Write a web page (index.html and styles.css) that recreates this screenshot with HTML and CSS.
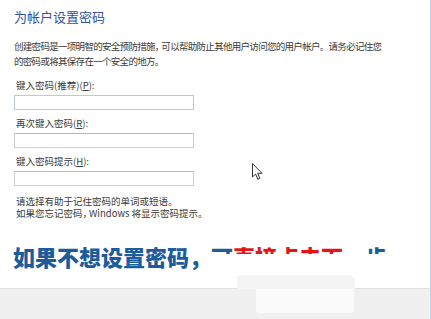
FILE: index.html
```html
<!DOCTYPE html>
<html lang="zh-CN">
<head>
<meta charset="utf-8">
<link rel="stylesheet" href="styles.css">
</head>
<body>
<div class="window">
  <main class="content">
    <h1 class="title">为帐户设置密码</h1>
    <p class="intro">创建密码是一项明智的安全预防措施<span class="narrow">，</span>可以帮助防止其他用户访问您的用户帐户。请务必记住您<br>的密码或将其保存在一个安全的地方。</p>
    <div class="field">
      <label class="label">键入密码(推荐)(<u>P</u>):</label>
      <div class="input focus"></div>
    </div>
    <div class="field">
      <label class="label">再次键入密码(<u>R</u>):</label>
      <div class="input"></div>
    </div>
    <div class="field">
      <label class="label">键入密码提示(<u>H</u>):</label>
      <div class="input"></div>
    </div>
    <p class="hint">请选择有助于记住密码的单词或短语。<br>如果您忘记密码<span class="narrow">，</span>Windows 将显示密码提示。</p>
    <div class="banner">
      <span class="banner-main">如果不想设置密码，</span><span class="banner-clip"><span class="blue">可</span><span class="red">直接点击下</span><span class="blue">一步</span></span>
    </div>
  </main>
  <footer class="footer"></footer>
  <div class="smudge-top"></div>
  <div class="smudge-bottom"></div>
  <svg class="cursor" width="12" height="18" viewBox="0 0 12 18">
    <path d="M0.5 0.5 L0.5 14 L3.6 11 L5.8 16.3 L7.8 15.4 L5.7 10.3 L10 10.3 Z" fill="#fff" stroke="#333" stroke-width="1" stroke-linejoin="round"/>
  </svg>
</div>
</body>
</html>
```
FILE: styles.css
```css
html, body {
  margin: 0;
  padding: 0;
  background: #fff;
}
.window {
  position: relative;
  width: 431px;
  height: 319px;
  overflow: hidden;
  display: flex;
  flex-direction: column;
  font-family: "Noto Sans CJK SC", "Noto Sans", sans-serif;
  color: #3a3a3a;
  background: #fff;
  border-right: 1px solid #c3d5ea;
  box-sizing: border-box;
}
.content {
  flex: 1;
  padding: 9px 0 0 14px;
}
.title {
  margin: 0;
  font-size: 13px;
  line-height: 16px;
  font-weight: 400;
  color: #34509f;
}
.intro {
  margin: 14px 0 0 0;
  font-size: 9.5px;
  line-height: 15px;
  letter-spacing: -0.7px;
  color: #3a3a3a;
  white-space: nowrap;
}
.narrow {
  letter-spacing: -3px;
}
.field {
  display: flex;
  flex-direction: column;
  gap: 4px;
  margin-top: 7px;
}
.field:first-of-type {
  margin-top: 10px;
}
.label {
  margin-left: 2px;
  font-size: 9.5px;
  line-height: 12px;
  color: #3a3a3a;
}
.label u {
  text-underline-offset: 1px;
}
.input {
  width: 180px;
  height: 15px;
  box-sizing: border-box;
  border: 1px solid #cfcfcf;
  border-top-color: #b9b9b9;
  background: #fff;
}
.input.focus {
  border-color: #b7c9dc;
}
.hint {
  margin: 9px 0 0 2px;
  font-size: 9.5px;
  line-height: 12px;
  color: #3a3a3a;
}
.banner {
  margin-top: 26px;
  display: flex;
  align-items: flex-start;
  font-size: 22px;
  line-height: 22px;
  font-weight: 900;
  margin-left: -1px;
}
.banner-main {
  color: #1c5b9c;
}
.banner-clip {
  display: inline-block;
  height: 9px;
  overflow: hidden;
}
.blue { color: #1c5b9c; }
.red { color: #e51515; }
.footer {
  flex: none;
  height: 30px;
  background: #f0f0f0;
  border-top: 1px solid #e0e0e0;
}
.smudge-top {
  position: absolute;
  left: 237px;
  top: 275px;
  width: 118px;
  height: 14px;
  background: #f4f4f4;
  border-radius: 3px 6px 0 0;
}
.smudge-bottom {
  position: absolute;
  left: 256px;
  top: 289px;
  width: 98px;
  height: 24px;
  background: #fbfbfb;
  border-radius: 0 0 4px 4px;
}
.cursor {
  position: absolute;
  left: 252px;
  top: 163px;
}
```
